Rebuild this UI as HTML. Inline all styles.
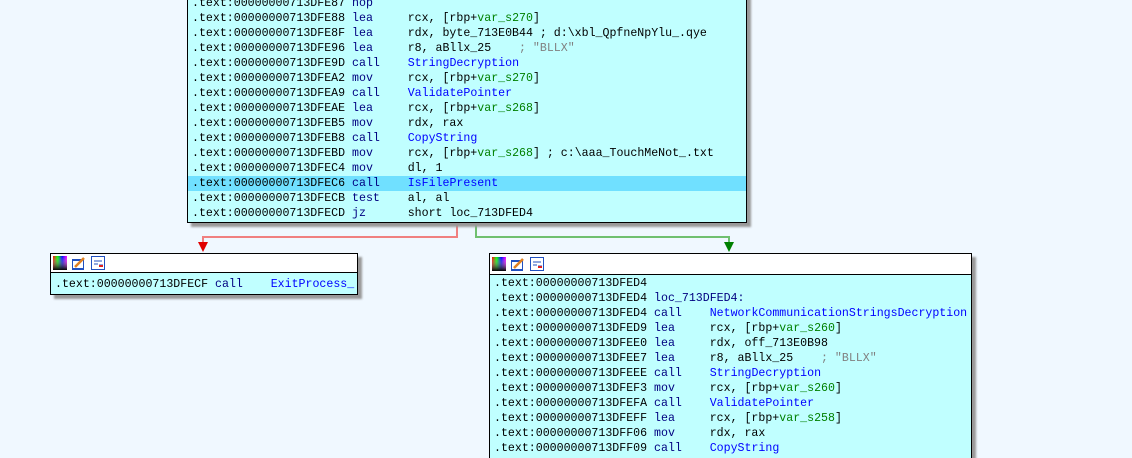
<!DOCTYPE html>
<html style="overflow:hidden;width:1132px;height:458px"><head><style>
body{margin:0;width:1132px;height:458px;background:#f0f8ff;overflow:hidden;position:relative;font-family:"Liberation Mono",monospace;font-size:11.6px;}
.box{position:absolute;background:#c0ffff;border:1px solid #000;box-shadow:4px 4px 2px #999;}
.l{position:absolute;left:4px;height:15px;line-height:15px;white-space:pre;color:#000;}
.m{color:#000080}.f{color:#0000ff}.v{color:#008000}.c{color:#808080}
.hl{background:#70e0ff;left:0;right:0;padding-left:4px}
.hdr{position:absolute;left:0;right:0;top:0;height:18px;background:#fff;border-bottom:1px solid #000}
.ic{position:absolute;top:2px;width:14px;height:14px}
</style></head><body>
<svg style="position:absolute;left:0;top:0" width="1132" height="458">
<defs><linearGradient id="g1"><stop offset="0" stop-color="#f00"/><stop offset=".33" stop-color="#0f0"/><stop offset=".66" stop-color="#00f"/><stop offset="1" stop-color="#f0f"/></linearGradient><linearGradient id="g2" x2="0" y2="1"><stop offset="0" stop-color="#fff" stop-opacity="0"/><stop offset="1" stop-color="#000"/></linearGradient></defs>
<polyline points="457,222 457,237 203,237 203,244" fill="none" stroke="#f08080" stroke-width="2"/>
<polygon points="198,242 208,242 203,252" fill="#e00000"/>
<polyline points="476,222 476,237 729,237 729,244" fill="none" stroke="#70c070" stroke-width="2"/>
<polygon points="724,242 734,242 729,252" fill="#008000"/>
</svg>

<div class="box" style="left:187px;top:-10px;width:558px;height:231px">
<div class="l" style="top:5px">.text:00000000713DFE87 <span class="m">nop</span></div>
<div class="l" style="top:20px">.text:00000000713DFE88 <span class="m">lea</span>     rcx, [rbp+<span class="v">var_s270</span>]</div>
<div class="l" style="top:35px">.text:00000000713DFE8F <span class="m">lea</span>     rdx, byte_713E0B44 ; d:\xbl_QpfneNpYlu_.qye</div>
<div class="l" style="top:50px">.text:00000000713DFE96 <span class="m">lea</span>     r8, aBllx_25    <span class="c">; "BLLX"</span></div>
<div class="l" style="top:65px">.text:00000000713DFE9D <span class="m">call</span>    <span class="f">StringDecryption</span></div>
<div class="l" style="top:80px">.text:00000000713DFEA2 <span class="m">mov</span>     rcx, [rbp+<span class="v">var_s270</span>]</div>
<div class="l" style="top:95px">.text:00000000713DFEA9 <span class="m">call</span>    <span class="f">ValidatePointer</span></div>
<div class="l" style="top:110px">.text:00000000713DFEAE <span class="m">lea</span>     rcx, [rbp+<span class="v">var_s268</span>]</div>
<div class="l" style="top:125px">.text:00000000713DFEB5 <span class="m">mov</span>     rdx, rax</div>
<div class="l" style="top:140px">.text:00000000713DFEB8 <span class="m">call</span>    <span class="f">CopyString</span></div>
<div class="l" style="top:155px">.text:00000000713DFEBD <span class="m">mov</span>     rcx, [rbp+<span class="v">var_s268</span>] ; c:\aaa_TouchMeNot_.txt</div>
<div class="l" style="top:170px">.text:00000000713DFEC4 <span class="m">mov</span>     dl, 1</div>
<div class="l hl" style="top:185px">.text:00000000713DFEC6 <span class="m">call</span>    <span class="f">IsFilePresent</span></div>
<div class="l" style="top:200px">.text:00000000713DFECB <span class="m">test</span>    al, al</div>
<div class="l" style="top:215px">.text:00000000713DFECD <span class="m">jz</span>      short loc_713DFED4</div>
</div>

<div class="box" style="left:50px;top:253px;width:306px;height:40px">
<div class="hdr">
<svg class="ic" style="left:2px" viewBox="0 0 14 14"><rect width="14" height="14" fill="url(#g1)"/><rect width="14" height="14" fill="url(#g2)"/></svg>
<svg class="ic" style="left:21px" viewBox="0 0 14 14"><rect x="0" y="3" width="12" height="11" fill="#2050c0"/><rect x="1" y="5" width="10" height="7" fill="#fff"/><path d="M3 11 L12 2" stroke="#e08020" stroke-width="2.5"/></svg>
<svg class="ic" style="left:40px" viewBox="0 0 14 14"><rect x=".5" y=".5" width="13" height="13" fill="#fff" stroke="#2050c0"/><path d="M3 5h8M3 8h4M8 9h4" stroke="#2050c0"/><path d="M8 10h4" stroke="#e02020" stroke-width="2"/></svg>
</div>
<div class="l" style="top:23px">.text:00000000713DFECF <span class="m">call</span>    <span class="f">ExitProcess_</span></div>
</div>

<div class="box" style="left:489px;top:253px;width:481px;height:204px;border-bottom:none;overflow:hidden">
<div class="hdr" style="height:20px">
<svg class="ic" style="left:2px;top:3px" viewBox="0 0 14 14"><rect width="14" height="14" fill="url(#g1)"/><rect width="14" height="14" fill="url(#g2)"/></svg>
<svg class="ic" style="left:21px;top:3px" viewBox="0 0 14 14"><rect x="0" y="3" width="12" height="11" fill="#2050c0"/><rect x="1" y="5" width="10" height="7" fill="#fff"/><path d="M3 11 L12 2" stroke="#e08020" stroke-width="2.5"/></svg>
<svg class="ic" style="left:40px;top:3px" viewBox="0 0 14 14"><rect x=".5" y=".5" width="13" height="13" fill="#fff" stroke="#2050c0"/><path d="M3 5h8M3 8h4M8 9h4" stroke="#2050c0"/><path d="M8 10h4" stroke="#e02020" stroke-width="2"/></svg>
</div>
<div class="l" style="top:22px">.text:00000000713DFED4</div>
<div class="l" style="top:37px">.text:00000000713DFED4 <span class="m">loc_713DFED4:</span></div>
<div class="l" style="top:52px">.text:00000000713DFED4 <span class="m">call</span>    <span class="f">NetworkCommunicationStringsDecryption</span></div>
<div class="l" style="top:67px">.text:00000000713DFED9 <span class="m">lea</span>     rcx, [rbp+<span class="v">var_s260</span>]</div>
<div class="l" style="top:82px">.text:00000000713DFEE0 <span class="m">lea</span>     rdx, off_713E0B98</div>
<div class="l" style="top:97px">.text:00000000713DFEE7 <span class="m">lea</span>     r8, aBllx_25    <span class="c">; "BLLX"</span></div>
<div class="l" style="top:112px">.text:00000000713DFEEE <span class="m">call</span>    <span class="f">StringDecryption</span></div>
<div class="l" style="top:127px">.text:00000000713DFEF3 <span class="m">mov</span>     rcx, [rbp+<span class="v">var_s260</span>]</div>
<div class="l" style="top:142px">.text:00000000713DFEFA <span class="m">call</span>    <span class="f">ValidatePointer</span></div>
<div class="l" style="top:157px">.text:00000000713DFEFF <span class="m">lea</span>     rcx, [rbp+<span class="v">var_s258</span>]</div>
<div class="l" style="top:172px">.text:00000000713DFF06 <span class="m">mov</span>     rdx, rax</div>
<div class="l" style="top:187px">.text:00000000713DFF09 <span class="m">call</span>    <span class="f">CopyString</span></div>
</div>
</body></html>
